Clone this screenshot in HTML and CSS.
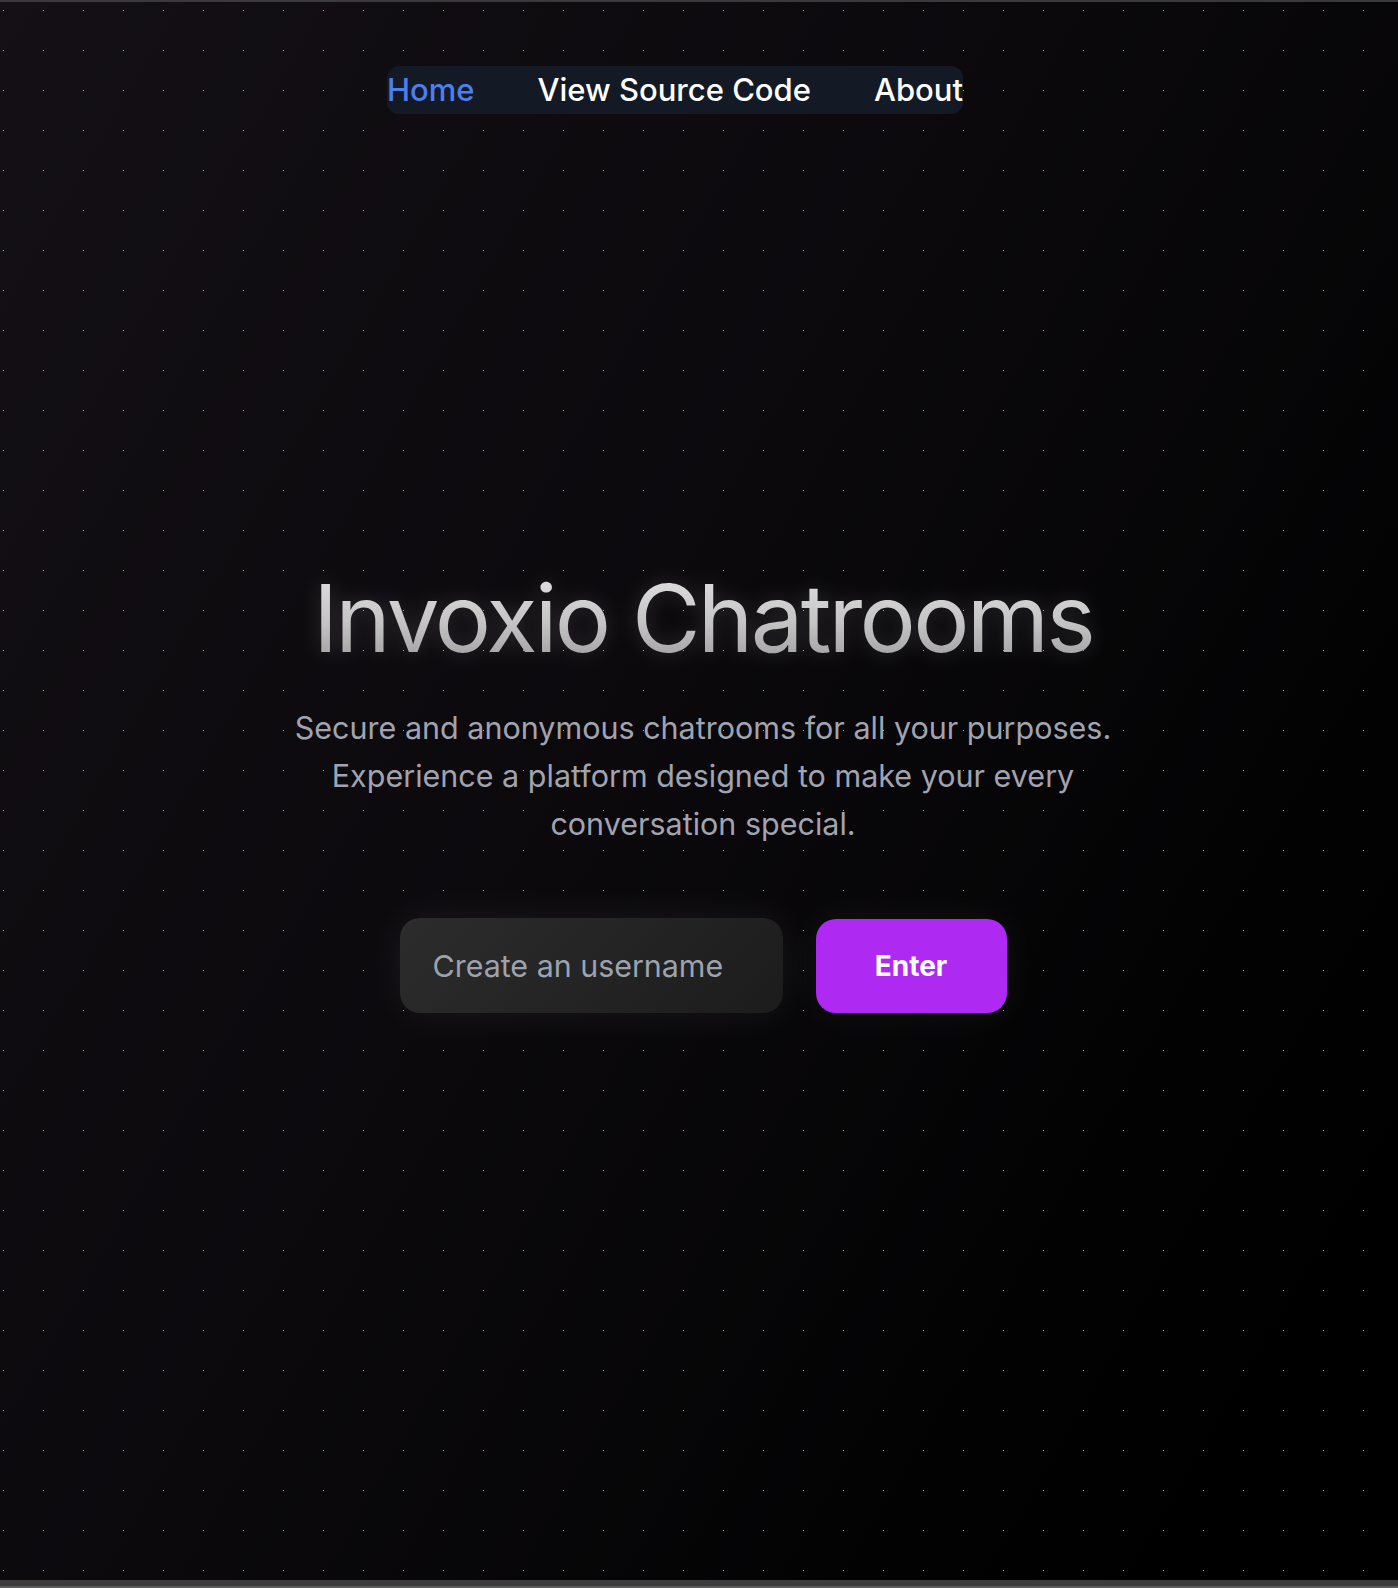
FILE: index.html
```html
<!DOCTYPE html>
<html lang="en">
<head>
<meta charset="utf-8">
<title>Invoxio Chatrooms</title>
<link rel="stylesheet" href="styles.css">
</head>
<body>
<div class="frame-top"></div>
<main class="page">
  <nav class="nav">
    <a class="nav-link active" href="#">Home</a>
    <a class="nav-link" href="#">View Source Code</a>
    <a class="nav-link" href="#">About</a>
  </nav>
  <section class="hero">
    <h1 class="title">Invoxio Chatrooms</h1>
    <p class="subtitle">Secure and anonymous chatrooms for all your purposes. Experience a platform designed to make your every conversation special.</p>
    <form class="join" onsubmit="return false">
      <input class="username" type="text" placeholder="Create an username">
      <button class="enter" type="submit">Enter</button>
    </form>
  </section>
</main>
<div class="frame-bottom"></div>
</body>
</html>
```

FILE: styles.css
```css
html, body {
  margin: 0;
  padding: 0;
  background: #000;
}

body {
  font-family: Inter, "Noto Sans", "Liberation Sans", sans-serif;
}

.frame-top {
  height: 2px;
  background: #3a3a3a;
}

.frame-bottom {
  height: 6px;
  background: #3c3c3c;
  border-bottom: 2px solid #5c5c5c;
}

.page {
  position: relative;
  height: 1578px;
  box-sizing: border-box;
  padding-top: 64px;
  display: flex;
  flex-direction: column;
  align-items: center;
  background: linear-gradient(120deg, #141016 0%, #0b090c 45%, #000 89%);
}

/* dot grid */
.page::before {
  content: "";
  position: absolute;
  inset: 0;
  z-index: 0;
  pointer-events: none;
  background-image: linear-gradient(90deg, #a2a2a2 1px, transparent 1px);
  background-size: 40px 100%;
  background-position: 3px 0;
  -webkit-mask-image: linear-gradient(180deg, #000 1px, transparent 1px);
  mask-image: linear-gradient(180deg, #000 1px, transparent 1px);
  -webkit-mask-size: 100% 40px;
  mask-size: 100% 40px;
  -webkit-mask-position: 0 8px;
  mask-position: 0 8px;
}

.nav {
  position: relative;
  z-index: 1;
  display: flex;
  align-items: center;
  gap: 63px;
  height: 48px;
  background: #131a26;
  border-radius: 12px;
  margin-right: 48px;
}

.nav-link {
  font-size: 31px;
  font-weight: 500;
  line-height: 48px;
  color: #ffffff;
  text-decoration: none;
}

.nav-link.active {
  color: #4b7ff0;
}

.hero {
  position: relative;
  z-index: 1;
  margin: 456px 0 0 8px;
  display: flex;
  flex-direction: column;
  align-items: center;
}

.title {
  margin: 0;
  font-size: 94px;
  font-weight: 400;
  line-height: 96px;
  letter-spacing: -2.8px;
  background: linear-gradient(180deg, #e2e2e2 0%, #c4c4c4 55%, #9c9c9c 100%);
  -webkit-background-clip: text;
  background-clip: text;
  color: transparent;
  filter: drop-shadow(0 0 10px rgba(255, 255, 255, 0.16));
}

.subtitle {
  margin: 38px 0 0;
  max-width: 870px;
  text-align: center;
  font-size: 30.5px;
  line-height: 48px;
  color: #a1a4b0;
}

.join {
  margin: 70px 0 0;
  display: flex;
  align-items: center;
  gap: 33px;
}

.username {
  width: 383px;
  height: 95px;
  box-sizing: border-box;
  padding: 0 0 0 33px;
  border: none;
  outline: none;
  border-radius: 20px;
  background: linear-gradient(135deg, #2c2c2c 0%, #1c1c1c 100%);
  box-shadow: 0 0 40px rgba(255, 255, 255, 0.07);
  font-family: inherit;
  font-size: 30.4px;
  color: #ffffff;
}

.username::placeholder {
  color: #9ca3af;
}

.enter {
  width: 191px;
  height: 94px;
  border: none;
  border-radius: 20px;
  background: #ae2af2;
  box-shadow: 0 0 40px rgba(255, 255, 255, 0.06);
  font-family: inherit;
  font-size: 28px;
  font-weight: 700;
  color: #ffffff;
  cursor: pointer;
}
```
